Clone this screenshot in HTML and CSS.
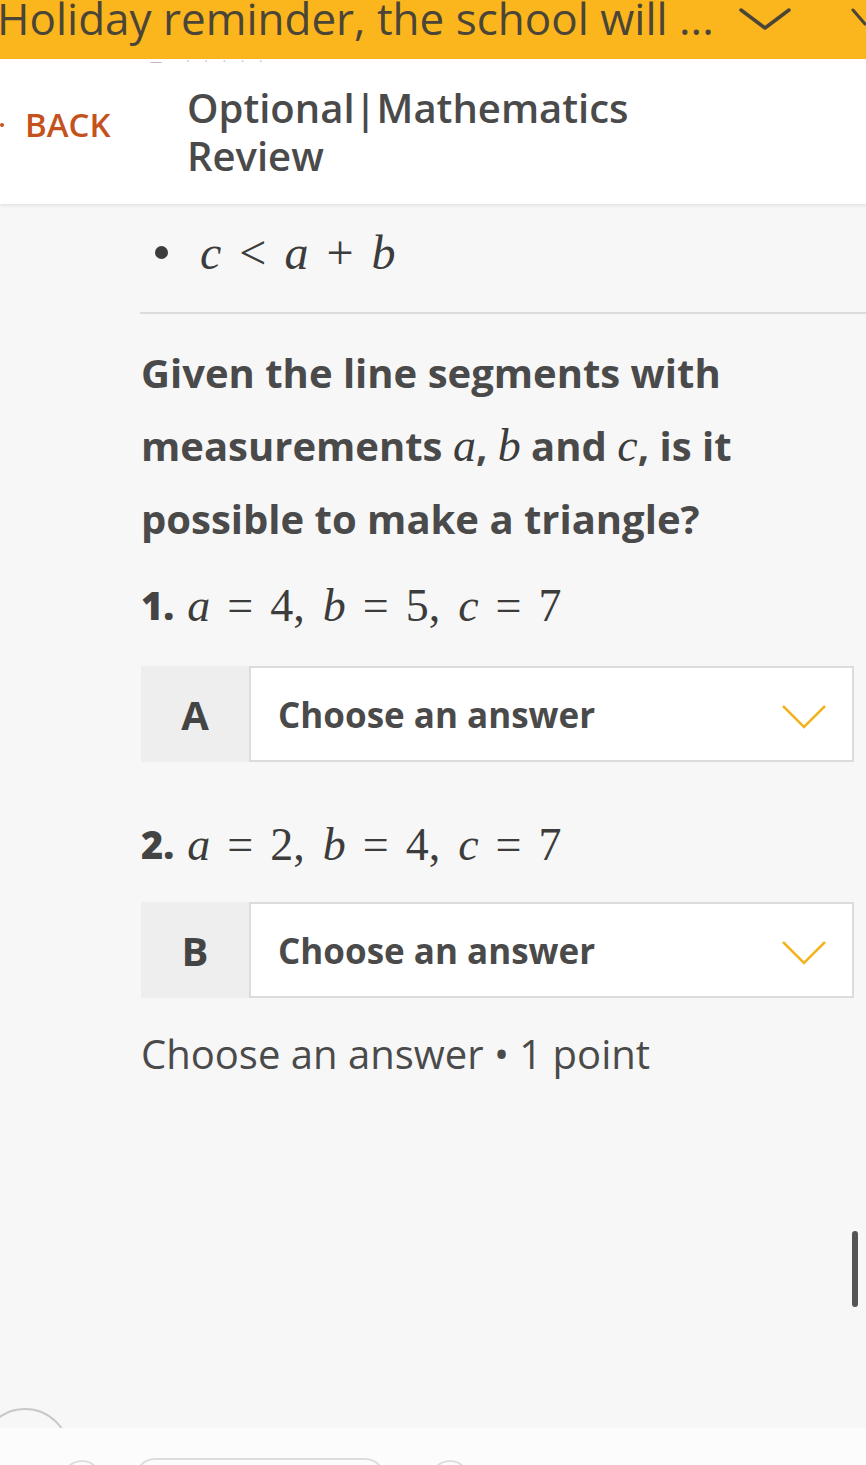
FILE: index.html
```html
<!DOCTYPE html>
<html>
<head>
<meta charset="utf-8">
<link rel="stylesheet" href="styles.css">
</head>
<body>
<div class="page">
  <div class="banner">
    <span class="banner-text">Holiday reminder, the school will ...</span>
    <svg class="banner-chev" width="52" height="24" viewBox="0 0 52 24"><path d="M2 3 L26 21 L50 3" fill="none" stroke="#4a4536" stroke-width="3.5" stroke-linecap="round" stroke-linejoin="round"/></svg>
    <svg class="banner-next" width="16" height="30" viewBox="0 0 16 30"><path d="M2 3 L14 17" fill="none" stroke="#4a4536" stroke-width="3" stroke-linecap="round"/></svg>
  </div>
  <header class="header">
    <div class="ghost-text">— &nbsp;· · · · ·</div>
    <div class="header-row">
      <div class="back"><span class="back-dot"></span><span class="back-label">BACK</span></div>
      <div class="title">Optional|Mathematics<br>Review</div>
    </div>
  </header>
  <main class="content">
    <div class="bullet-row"><span class="bullet"></span><span class="math big"><i>c</i><span class="op">&lt;</span><i>a</i><span class="op">+</span><i>b</i></span></div>
    <hr class="rule">
    <p class="question">Given the line segments with measurements <span class="math q"><i>a</i></span>, <span class="math q"><i>b</i></span> and <span class="math q"><i>c</i></span>, is it possible to make a triangle?</p>
    <div class="item"><b>1.</b><span class="math"><i>a</i><span class="op">=</span>4<span class="cm">,</span><i>b</i><span class="op">=</span>5<span class="cm">,</span><i>c</i><span class="op">=</span>7</span></div>
    <div class="answer">
      <div class="answer-label">A</div>
      <div class="answer-select"><span>Choose an answer</span>
        <svg width="46" height="26" viewBox="0 0 46 26"><path d="M2 2 L23 23 L44 2" fill="none" stroke="#f2b520" stroke-width="2.5"/></svg>
      </div>
    </div>
    <div class="item item2"><b>2.</b><span class="math"><i>a</i><span class="op">=</span>2<span class="cm">,</span><i>b</i><span class="op">=</span>4<span class="cm">,</span><i>c</i><span class="op">=</span>7</span></div>
    <div class="answer answer2">
      <div class="answer-label">B</div>
      <div class="answer-select"><span>Choose an answer</span>
        <svg width="46" height="26" viewBox="0 0 46 26"><path d="M2 2 L23 23 L44 2" fill="none" stroke="#f2b520" stroke-width="2.5"/></svg>
      </div>
    </div>
    <p class="meta">Choose an answer • 1 point</p>
    <div class="scrollbar"></div>
  </main>
  <footer class="footer">
    <div class="arc"></div>
    <div class="nav-shape s1"></div>
    <div class="nav-shape s2"></div>
    <div class="nav-shape s3"></div>
  </footer>
</div>
</body>
</html>
```

FILE: styles.css
```css
* { box-sizing: border-box; }
html, body { margin: 0; padding: 0; }
body {
  width: 866px;
  height: 1465px;
  overflow: hidden;
  background: #f7f7f7;
  font-family: "Open Sans", "Noto Sans", sans-serif;
  color: #4a4a4a;
}
.page { position: relative; width: 866px; height: 1465px; display: flex; flex-direction: column; }

.banner {
  height: 59px;
  background: #fbb61e;
  display: flex;
  align-items: flex-start;
  position: relative;
  overflow: hidden;
  flex: none;
}
.banner-text {
  font-size: 44px;
  line-height: 40px;
  margin-left: -3px;
  margin-top: -2px;
  color: #4a4536;
  white-space: nowrap;
}
.banner-chev { position: absolute; left: 739px; top: 7px; }
.banner-next { position: absolute; left: 851px; top: 7px; }

.header {
  background: #fff;
  height: 145px;
  box-shadow: 0 2px 3px rgba(0,0,0,0.08);
  position: relative;
  z-index: 1;
  flex: none;
}
.ghost-text {
  position: absolute; left: 150px; top: -6px;
  font-size: 12px; color: #bbb; letter-spacing: 6px;
}
.header-row { display: flex; align-items: flex-start; padding-top: 25px; }
.back { width: 187px; display: flex; align-items: center; padding-top: 21px; }
.back-dot { width: 4px; height: 4px; background: #c4521c; border-radius: 2px; margin-right: 21px; }
.back-label { color: #c4521c; font-size: 33px; line-height: 40px; font-weight: 600; }
.title { font-size: 40px; line-height: 48px; font-weight: 600; color: #4a4a4a; }

.content { flex: 1; padding-left: 141px; position: relative; }
.math { font-family: "Liberation Serif", "DejaVu Serif", serif; font-weight: normal; color: #3c3c3c; }
.math i { font-style: italic; }
.math .op { font-style: normal; }
.bullet-row { display: flex; align-items: center; height: 96px; padding-left: 14px; }
.bullet { width: 13px; height: 13px; background: #3c3c3c; border-radius: 50%; margin-right: 32px; }
.math.big { font-size: 48px; }
.math.big .op { margin: 0 18px; }
.rule { border: none; border-top: 2px solid #dcdcdc; margin: 12px 0 0 -1px; }

.question {
  font-size: 40px; line-height: 73px; font-weight: 700; color: #4a4a4a;
  margin: 22px 0 0 0; padding-right: 4px;
}
.question .math.q { font-size: 46px; }

.item { font-size: 38px; font-weight: 700; margin-top: 24px; height: 52px; display: flex; align-items: center; color: #444; }
.item b { margin-right: 13px; }
.item .math { font-size: 46px; }
.item .math .op { margin: 0 17px; }
.item .math .cm { margin-right: 18px; }
.item2 { margin-top: 56px; }

.answer { display: flex; height: 96px; margin-top: 35px; width: 713px; }
.answer2 { margin-top: 32px; }
.answer-label {
  width: 108px; background: #eeeeee; display: flex; align-items: center; justify-content: center;
  font-size: 40px; font-weight: 700; color: #444;
}
.answer-select {
  flex: 1; background: #fff; border: 2px solid #dcdcdc; display: flex; align-items: center; justify-content: space-between;
  padding: 0 25px 0 27px;
}
.answer-select span { font-size: 35px; font-weight: 700; color: #4a4a4a; }
.answer-select svg { margin-top: 6px; }

.meta { font-size: 40px; margin: 28px 0 0 0; color: #4a4a4a; }

.scrollbar { position: absolute; right: 8px; top: 1027px; width: 6px; height: 76px; background: #555; border-radius: 3px; }

.footer { height: 37px; background: #fcfcfc; position: relative; flex: none; }
.arc {
  position: absolute; left: -20px; top: -20px; width: 90px; height: 90px;
  border: 2px solid #c8c8c8; border-radius: 50%;
  clip-path: inset(0 0 70px 0);
}
.nav-shape { position: absolute; border: 2px solid #ddd; border-bottom: none; }
.s1 { left: 62px; top: 32px; width: 40px; height: 20px; border-radius: 20px 20px 0 0; }
.s2 { left: 135px; top: 30px; width: 250px; height: 20px; border-radius: 30px 30px 0 0; }
.s3 { left: 430px; top: 32px; width: 40px; height: 20px; border-radius: 20px 20px 0 0; }
```
